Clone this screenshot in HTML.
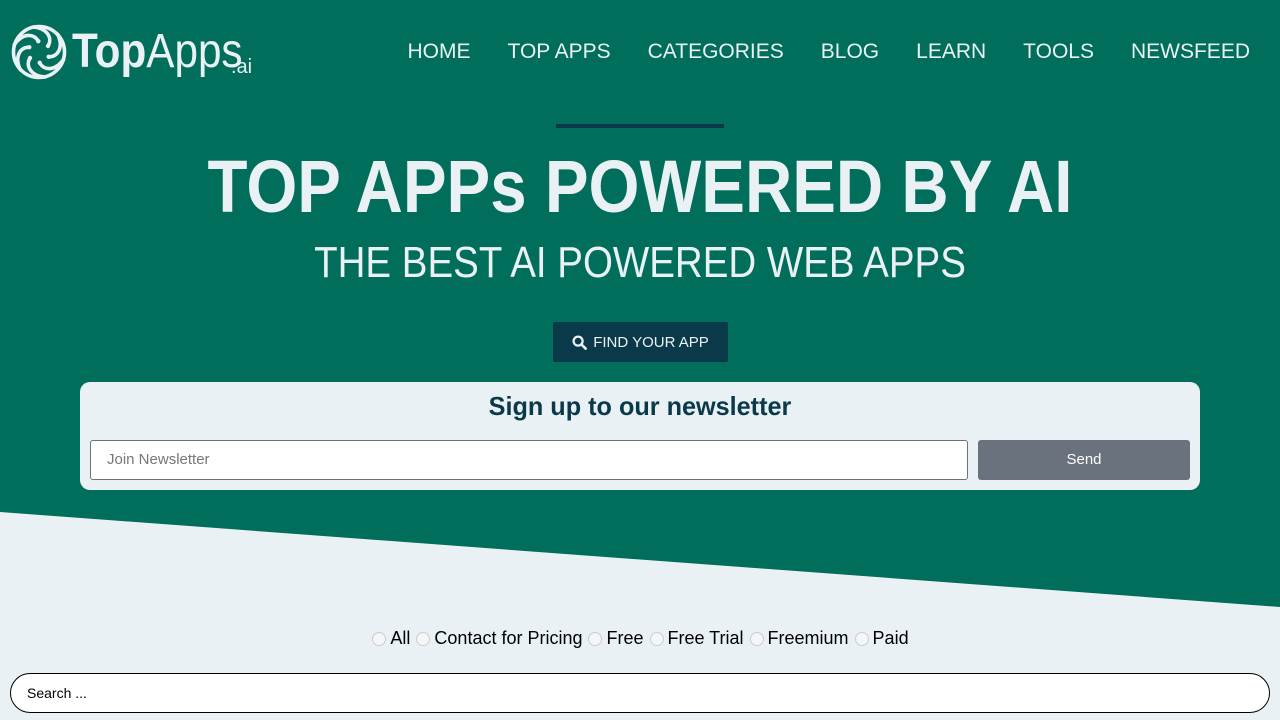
<!DOCTYPE html>
<html><head><meta charset="utf-8"><style>
*{margin:0;padding:0;box-sizing:border-box}
body{width:1280px;height:720px;overflow:hidden;background:#eaf1f4;font-family:"Liberation Sans",sans-serif;position:relative}
.hero{position:absolute;left:0;top:0;width:1280px;height:610px;background:#006e5a;clip-path:polygon(0 0,1280px 0,1280px 607px,0 512px)}
.logo{position:absolute;left:10px;top:22px;color:#eaf1f4}
.logo svg{position:absolute;left:0;top:0}
.logo .txt{position:absolute;left:62px;top:0px;white-space:nowrap;font-size:48px;line-height:60px;transform:scaleX(0.88);transform-origin:left}
.logo .t1{font-weight:bold}
.logo .ai{position:absolute;left:221px;top:34px;font-size:20px}
nav{position:absolute;top:40px;right:30px;display:flex;gap:37px;color:#eaf1f4;font-size:21px}
.bar{position:absolute;left:556px;top:124px;width:168px;height:4px;background:#0a3a4a}
h1{position:absolute;top:144px;width:1280px;text-align:center;color:#eaf1f4;font-size:74px;font-weight:bold;transform:scaleX(0.885)}
h2{position:absolute;top:238px;width:1280px;text-align:center;color:#eaf1f4;font-size:44px;font-weight:normal;transform:scaleX(0.875)}
.btn{position:absolute;left:553px;top:322px;width:175px;height:40px;background:#0a3a4a;color:#eaf1f4;font-size:15px;display:flex;align-items:center;justify-content:center;gap:6px;border-radius:2px}
.nl{position:absolute;left:80px;top:382px;width:1120px;height:108px;background:#eaf1f4;border-radius:10px}
.nl h3{text-align:center;color:#0a3a4a;font-size:26px;margin-top:9px;transform:scaleX(0.97)}
.nl .in{position:absolute;left:10px;top:58px;width:878px;height:40px;background:#fff;border:1px solid #69727d;border-radius:3px;color:#777;font-size:15px;line-height:38px;padding-left:16px}
.nl .send{position:absolute;left:898px;top:58px;width:212px;height:40px;background:#69727d;color:#fff;font-size:15px;line-height:40px;text-align:center;border-radius:3px}
.radios{position:absolute;top:628px;width:1280px;text-align:center;font-size:18px;color:#000}
.r{display:inline-block;width:14px;height:14px;border:1px solid #ccc;border-radius:50%;background:#f4f6f7;vertical-align:-2px;margin:0 4px 0 1px}
.search{position:absolute;left:10px;top:673px;width:1260px;height:40px;background:#fff;border:1px solid #000;border-radius:20px;font-size:14px;line-height:38px;padding-left:16px;color:#000}
</style></head><body>
<div class="hero"></div>
<div class="logo">
<svg width="58" height="60" viewBox="-29 -30 58 60" fill="none" stroke="#eaf1f4" stroke-width="3.6" stroke-linecap="round">
<circle cx="0" cy="0" r="25.5"/>
<g id="p"><path d="M-6,-25 C8,-24 14,-14 9,-6"/><circle cx="9" cy="-6" r="2.2" fill="#eaf1f4" stroke="none"/></g>
<use href="#p" transform="rotate(60)"/><use href="#p" transform="rotate(120)"/><use href="#p" transform="rotate(180)"/><use href="#p" transform="rotate(240)"/><use href="#p" transform="rotate(300)"/>
</svg>
<div class="txt"><span class="t1">Top</span>Apps</div><span class="ai">.ai</span>
</div>
<nav><span>HOME</span><span>TOP APPS</span><span>CATEGORIES</span><span>BLOG</span><span>LEARN</span><span>TOOLS</span><span>NEWSFEED</span></nav>
<div class="bar"></div>
<h1>TOP APPs POWERED BY AI</h1>
<h2>THE BEST AI POWERED WEB APPS</h2>
<div class="btn"><svg width="15" height="15" viewBox="0 0 16 16"><circle cx="6.5" cy="6.5" r="4.8" stroke="#eaf1f4" stroke-width="2.4" fill="none"/><path d="M10 10 L14.5 14.5" stroke="#eaf1f4" stroke-width="2.8" stroke-linecap="round"/></svg>FIND YOUR APP</div>
<div class="nl"><h3>Sign up to our newsletter</h3><div class="in">Join Newsletter</div><div class="send">Send</div></div>
<div class="radios"><span class="r"></span>All <span class="r"></span>Contact for Pricing <span class="r"></span>Free <span class="r"></span>Free Trial <span class="r"></span>Freemium <span class="r"></span>Paid</div>
<div class="search">Search ...</div>
</body></html>
